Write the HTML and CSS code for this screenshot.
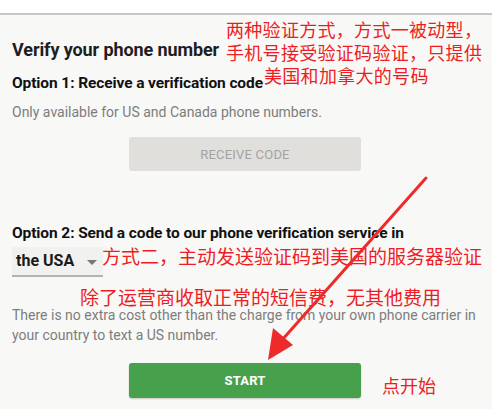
FILE: index.html
```html
<!DOCTYPE html>
<html>
<head>
<meta charset="utf-8">
<link rel="stylesheet" href="styles.css">
</head>
<body>
<div class="top"></div>
<main class="panel">
  <h1 class="title">Verify your phone number</h1>
  <h2 class="opt">Option 1: Receive a verification code</h2>
  <p class="note">Only available for US and Canada phone numbers.</p>
  <div class="btn-row"><button class="btn btn-disabled">RECEIVE CODE</button></div>
  <h2 class="opt opt2">Option 2: Send a code to our phone verification service in</h2>
  <div class="select"><span>the USA</span><span class="caret"></span></div>
  <p class="note note2">There is no extra cost other than the charge from your own phone carrier in your country to text a US number.</p>
  <div class="btn-row btn-row2"><button class="btn btn-start">START</button></div>

  <div class="ann ann1">两种验证方式，方式一被动型，<br>手机号接受验证码验证，只提供<br><span class="ann1c">美国和加拿大的号码</span></div>
  <div class="ann ann2">方式二，主动发送验证码到美国的服务器验证</div>
  <div class="ann ann3">除了运营商收取正常的短信费，无其他费用</div>
  <div class="ann ann4">点开始</div>
  <svg class="arrow" width="500" height="409" viewBox="0 0 500 409">
    <line x1="426" y1="178" x2="282" y2="340" stroke="#ee2b2b" stroke-width="3" stroke-linecap="round"/>
    <polygon points="268,360 273,328 293,345" fill="#ee2b2b"/>
  </svg>
</main>
</body>
</html>
```
FILE: styles.css
```css
* { box-sizing: border-box; }
html, body { margin: 0; padding: 0; background: #ffffff; }
body { width: 500px; height: 409px; overflow: hidden; font-family: Roboto, "Liberation Sans", sans-serif; position: relative; }
.top { height: 13px; width: 492px; background: #ffffff; }
.panel { width: 492px; height: 396px; background: #f8f8f6; border-top: 2px solid #c8c8c3; padding: 0 12px; }
.title { margin: 0; padding-top: 24px; font-size: 18px; line-height: 22px; font-weight: 700; color: #1e1e1e; letter-spacing: -0.1px; }
.opt { margin: 13px 0 0; font-size: 15.5px; line-height: 18px; font-weight: 700; color: #111; letter-spacing: -0.1px; }
.note { margin: 10px 0 0; font-size: 14px; line-height: 20px; color: #7d7d7d; }
.btn-row { display: flex; padding-left: 117px; margin-top: 15px; }
.btn { width: 232px; height: 34px; border: none; border-radius: 3px; font-family: Roboto, "Liberation Sans", sans-serif; font-size: 13px; letter-spacing: 0.2px; }
.btn-disabled { background: #e0dfdb; color: #a3a3a3; }
.opt2 { margin-top: 53px; }
.select { margin-top: 5px; width: 91px; height: 30px; border-bottom: 2px solid #b3b3b3; background: #f1f1ef; display: flex; align-items: center; padding-left: 4px; padding-bottom: 1px; font-size: 16px; font-weight: 700; color: #1a1a1a; }
.caret { margin-left: 13px; width: 0; height: 0; border-left: 5px solid transparent; border-right: 5px solid transparent; border-top: 5px solid #777; margin-top: 3px; }
.note2 { margin-top: 28px; }
.btn-row2 { margin-top: 18px; }
.btn-start { background: #47a04b; color: #ffffff; font-weight: 700; height: 35px; box-shadow: 0 1px 2px rgba(0,0,0,0.2); }
.ann { position: absolute; font-family: "Noto Sans CJK SC", sans-serif; color: #ee1c24; font-size: 18px; line-height: 23px; white-space: nowrap; }
.ann1 { left: 226px; top: 18px; letter-spacing: 0.3px; }
.ann1c { margin-left: 38px; }
.ann2 { left: 102px; top: 244px; font-size: 19px; }
.ann3 { left: 80px; top: 285px; font-size: 19px; }
.ann4 { left: 382px; top: 374px; }
.arrow { position: absolute; left: 0; top: 0; pointer-events: none; }
```
